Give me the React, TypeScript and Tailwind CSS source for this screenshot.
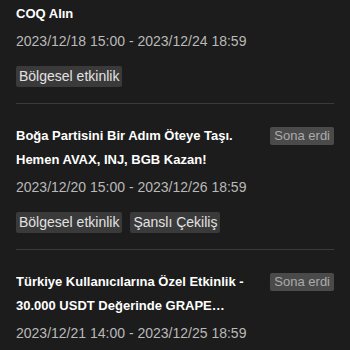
import type { ReactNode } from "react";

type Campaign = {
  id: number;
  title: string;
  period: string;
  tags: string[];
};

const campaigns: Campaign[] = [
  {
    id: 1,
    title: "Yılbaşı Etkinliğine Katılın ve Ücretsiz COQ Alın",
    period: "2023/12/18 15:00 - 2023/12/24 18:59",
    tags: ["Bölgesel etkinlik"],
  },
  {
    id: 2,
    title: "Boğa Partisini Bir Adım Öteye Taşı. Hemen AVAX, INJ, BGB Kazan!",
    period: "2023/12/20 15:00 - 2023/12/26 18:59",
    tags: ["Bölgesel etkinlik", "Şanslı Çekiliş"],
  },
  {
    id: 3,
    title:
      "Türkiye Kullanıcılarına Özel Etkinlik - 30.000 USDT Değerinde GRAPE Kazanmak İçin Hemen Katıl",
    period: "2023/12/21 14:00 - 2023/12/25 18:59",
    tags: ["Bölgesel etkinlik"],
  },
];

function Tag({ children }: { children: ReactNode }) {
  return (
    <span className="h-[21px] px-[3px] rounded-[2px] bg-[#3a3a3a] text-[#e2e2e2] text-[14px] leading-[21px]">
      {children}
    </span>
  );
}

function CampaignRow({ item }: { item: Campaign }) {
  return (
    <div className="pt-[20px] pb-4 border-b border-[#3a3a3a]">
      <div className="flex items-start gap-3">
        <h3 className="flex-1 text-[13px] leading-6 font-bold text-white line-clamp-2">
          {item.title}
        </h3>
        <span className="mt-[3px] h-[18px] px-[4px] rounded-[2px] bg-[#4a4a4a] text-[#ababab] text-[13px] leading-[18px] shrink-0">
          Sona erdi
        </span>
      </div>
      <p className="mt-[5px] text-[14px] leading-5 text-[#b9b9b9]">{item.period}</p>
      <div className="mt-[15px] flex gap-2">
        {item.tags.map((t) => (
          <Tag key={t}>{t}</Tag>
        ))}
      </div>
    </div>
  );
}

export default function App() {
  return (
    <div
      className="w-[350px] h-[350px] overflow-hidden bg-[#1c1c1c]"
      style={{ fontFamily: "'Liberation Sans', Arial, sans-serif" }}
    >
      <div className="-mt-[42px] pl-4 pr-4">
        {campaigns.map((c) => (
          <CampaignRow key={c.id} item={c} />
        ))}
      </div>
    </div>
  );
}
